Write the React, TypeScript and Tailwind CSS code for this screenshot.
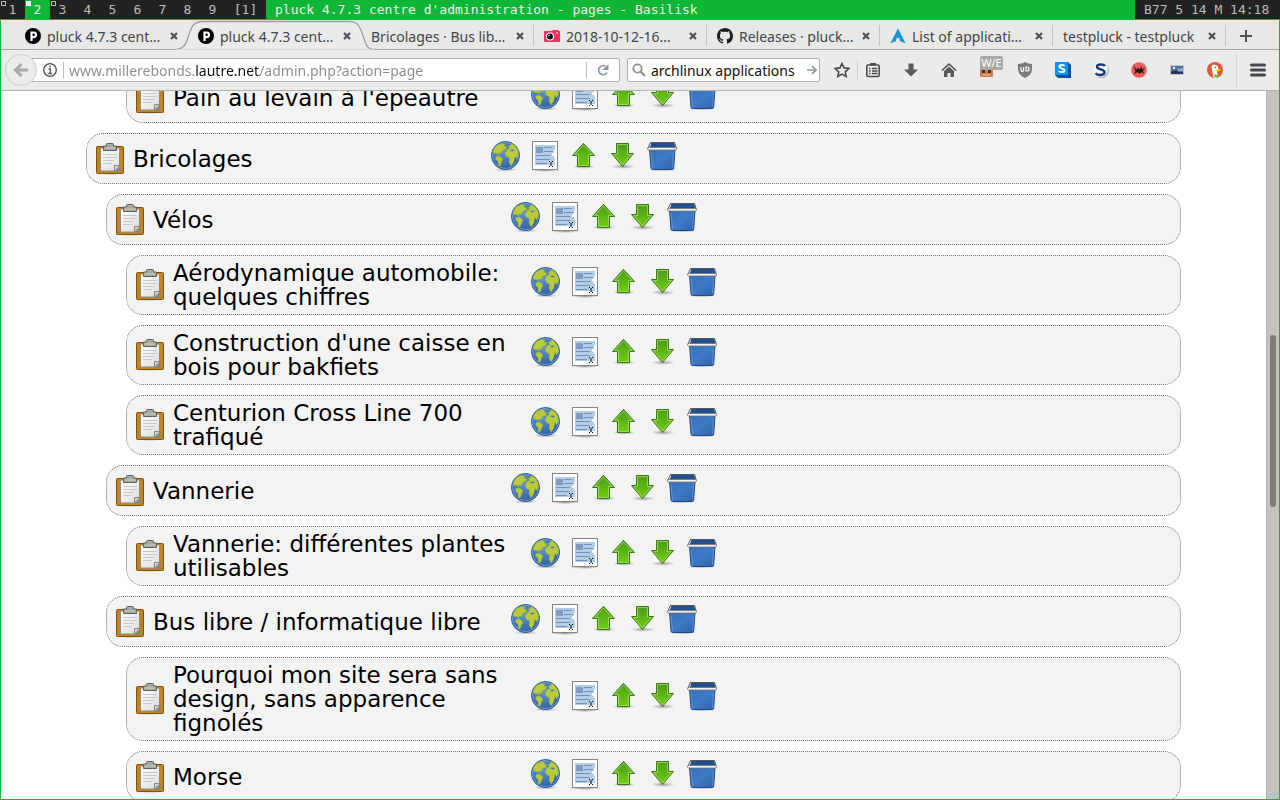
import type { ReactNode } from "react";
import { clsx } from "clsx";

type Page = { title: string; depth: 0 | 1 | 2 };

const pages: Page[] = [
  { title: "Pain au levain à l'épeautre", depth: 2 },
  { title: "Bricolages", depth: 0 },
  { title: "Vélos", depth: 1 },
  { title: "Aérodynamique automobile: quelques chiffres", depth: 2 },
  { title: "Construction d'une caisse en bois pour bakfiets", depth: 2 },
  { title: "Centurion Cross Line 700 trafiqué", depth: 2 },
  { title: "Vannerie", depth: 1 },
  { title: "Vannerie: différentes plantes utilisables", depth: 2 },
  { title: "Bus libre / informatique libre", depth: 1 },
  { title: "Pourquoi mon site sera sans design, sans apparence fignolés", depth: 2 },
  { title: "Morse", depth: 2 },
];

const indents = ["ml-0", "ml-5", "ml-10"];

/* Gradients shared by the page icons */
function IconDefs() {
  return (
    <svg width="0" height="0" className="absolute" aria-hidden="true">
      <defs>
        <radialGradient id="sea" cx="0.4" cy="0.35" r="0.7">
          <stop offset="0" stopColor="#5f97d8" />
          <stop offset="1" stopColor="#2a5b9f" />
        </radialGradient>
        <linearGradient id="leaf" x1="0" y1="0" x2="0" y2="1">
          <stop offset="0" stopColor="#4c9a1a" />
          <stop offset="1" stopColor="#6fd010" />
        </linearGradient>
        <linearGradient id="bin" x1="0" y1="0" x2="1" y2="1">
          <stop offset="0" stopColor="#3a6fb8" />
          <stop offset="0.5" stopColor="#3f7ac6" />
          <stop offset="1" stopColor="#2f62a6" />
        </linearGradient>
        <linearGradient id="paper" x1="0" y1="0" x2="1" y2="1">
          <stop offset="0" stopColor="#ffffff" />
          <stop offset="1" stopColor="#dcdcdc" />
        </linearGradient>
        <radialGradient id="shade">
          <stop offset="0" stopColor="#000" stopOpacity="0.35" />
          <stop offset="1" stopColor="#000" stopOpacity="0" />
        </radialGradient>
      </defs>
    </svg>
  );
}

function Clipboard() {
  return (
    <svg className="size-8 shrink-0" viewBox="0 0 32 32" aria-hidden="true">
      <ellipse cx="16" cy="30.5" rx="15" ry="1.5" fill="url(#shade)" />
      <rect x="2.5" y="3.5" width="27" height="27" rx="1" fill="#c4821e" stroke="#7d5210" />
      <path d="M6 5.5h20v23H6z" fill="#8b8d88" />
      <path d="M7 5.5h18v22H7z" fill="url(#paper)" />
      <path d="M9 11.500h14M9 14.500h14M9 17.500h11M9 20.500h9" stroke="#c8c8c6" />
      <path d="M20.500 28v-5.500H26z" fill="#d5d6d2" stroke="#85877f" />
      <path d="M20.500 28.500 26.500 22.500V28.500z" fill="#85877f" />
      <path d="M12.500 3V1.500q0-1 1-1h5q1 0 1 1V3h3v4.500h-13V3z" fill="#a9aba0" stroke="#5d5f59" />
      <path d="M11 5h10" stroke="#c9cbc1" />
    </svg>
  );
}

function Globe() {
  return (
    <svg className="size-8" viewBox="0 0 32 32" aria-hidden="true">
      <ellipse cx="16" cy="29.500" rx="12" ry="2" fill="url(#shade)" />
      <circle cx="15.500" cy="15.500" r="14" fill="url(#sea)" stroke="#2b5a97" />
      <circle cx="15.500" cy="15.500" r="13" fill="none" stroke="#86b0e2" strokeOpacity="0.7" />
      <path
        d="M4 9 6.500 5.500 11 3.500l4 .5-1 2 3 1-1.500 2.500-3 1-1 3-3-.5.5 2-2.500-1.500L4 13.500l-1-2zM6 16.500l3.500-.5 3.500 3-1.500 3-1 3.500-2 .5-.5-4.500L5.500 19zM18.500 6.500 22 3.500l3.500 3L28 10.500l.500 5-2 3-1.500-2-1.500 6-2.500 3.500-2-4 .5-4-3-1.500-1.500-3 2-4 2.500-1z"
        fill="#b9cb3a"
        stroke="#97aa2e"
        strokeWidth="0.5"
      />
      <path d="m20 10 3-.5 2 1-3 1z" fill="#4079bd" />
    </svg>
  );
}

function EditPage() {
  return (
    <svg className="size-8" viewBox="0 0 32 32" aria-hidden="true">
      <ellipse cx="16" cy="30.500" rx="15" ry="1.500" fill="url(#shade)" />
      <rect x="3.500" y="1.500" width="25" height="28" fill="#fcfcfc" stroke="#858783" />
      <path d="M6 5h20v5h-1v3h-2v3h2v2h1v7H6z" fill="#b5cce6" />
      <path d="M7 7h7v6H7z" fill="#7d9cbf" />
      <path d="M15 7.500h8M15 11.500h9M7 15.500h14M7 19.500h14M7 23.500h11" stroke="#6f92ba" />
      <path d="M20 21.500h1M23 21.500h1M22 22v4M20 26.500h1M23 26.500h1" stroke="#000" />
    </svg>
  );
}

function ArrowUp() {
  return (
    <svg className="size-8" viewBox="0 0 32 32" aria-hidden="true">
      <ellipse cx="16" cy="26.500" rx="12" ry="2.500" fill="url(#shade)" />
      <path d="M15.500 3.300 26.500 15.500H21.500V26.500H9.500V15.500H4.500z" fill="url(#leaf)" stroke="#38780c" />
      <path d="M15.500 4.900 24.400 14.500H20.500V25.500H10.500V14.500H6.600z" fill="none" stroke="#a5dc76" strokeOpacity="0.8" />
    </svg>
  );
}

function ArrowDown() {
  return (
    <svg className="size-8" viewBox="0 0 32 32" aria-hidden="true">
      <ellipse cx="16" cy="26.500" rx="12" ry="2.500" fill="url(#shade)" />
      <path d="M9.500 3.500H21.500V13.500H26.500L15.500 26.500 4.500 13.500H9.500z" fill="url(#leaf)" stroke="#38780c" />
      <path d="M10.500 4.500H20.500V14.500H24.300L15.500 24.900 6.700 14.500H10.500z" fill="none" stroke="#a5dc76" strokeOpacity="0.8" />
    </svg>
  );
}

function Bin() {
  return (
    <svg className="size-8" viewBox="0 0 32 32" aria-hidden="true">
      <ellipse cx="16" cy="29.500" rx="14" ry="2" fill="url(#shade)" />
      <path d="M3.500 9h25.500l-1.300 19q-.200 1.500-1.500 1.500H6.500q-1.300 0-1.500-1.500z" fill="url(#bin)" stroke="#204a87" />
      <path d="M4.500 2.500h23.500L30 9H3z" fill="#234f90" />
      <path d="M1.500 9 4.500 2.500h24l2 6.500" fill="none" stroke="#555753" />
      <path d="M3 8 5 3.500" stroke="#dcdcda" />
      <rect x="1.500" y="7.500" width="29" height="2.500" rx="1.200" fill="#f2f2f0" stroke="#73756f" strokeWidth="0.800" />
      <path d="M5 12 6.500 28M27.500 12 26.500 28" stroke="#6fa0dd" strokeOpacity="0.700" />
    </svg>
  );
}

const actions = [
  { label: "Voir", icon: <Globe /> },
  { label: "Modifier", icon: <EditPage /> },
  { label: "Monter", icon: <ArrowUp /> },
  { label: "Descendre", icon: <ArrowDown /> },
  { label: "Supprimer", icon: <Bin /> },
];

function PageRow({ title, depth }: Page) {
  return (
    <li
      className={clsx(
        "flex min-h-[51px] items-center gap-[7px] rounded-[17px] border border-dotted border-[#777777] bg-[#f3f3f3] px-[7px] py-[5px]",
        indents[depth],
      )}
    >
      <Clipboard />
      <span className="w-[350px] text-[23px] leading-6 text-black">{title}</span>
      <div className="flex gap-[7px] pb-[6px]">
        {actions.map((a) => (
          <a key={a.label} href="#" aria-label={a.label}>
            {a.icon}
          </a>
        ))}
      </div>
    </li>
  );
}

function StatusBar() {
  return (
    <div className="flex h-[19px] shrink-0 bg-[#222222] font-['DejaVu_Sans_Mono',monospace] text-[13px] leading-[19px] whitespace-pre text-[#bbbbbb]">
      {[1, 2, 3, 4, 5, 6, 7, 8, 9].map((n) => (
        <button
          key={n}
          className={clsx("relative w-[25px] text-center", n === 2 && "bg-[#0fb534] text-[#eeeeee]")}
        >
          {n <= 3 && (
            <span
              className={clsx(
                "absolute top-px left-px size-[5px] border",
                n === 2 ? "border-[#eeeeee] bg-[#eeeeee]" : "border-[#bbbbbb]",
              )}
            />
          )}
          {n}
        </button>
      ))}
      <span className="w-[41px] text-center">[1]</span>
      <span className="flex-1 bg-[#0fb534] pl-[9px] text-[#eeeeee]">
        pluck 4.7.3 centre d'administration - pages - Basilisk
      </span>
      <span className="w-[145px] pl-[9px]">B77 5 14 M 14:18</span>
    </div>
  );
}

function PluckIcon() {
  return (
    <svg className="size-4 shrink-0" viewBox="0 0 16 16" aria-hidden="true">
      <circle cx="8" cy="8" r="8" fill="#000" />
      <path d="M6.500 13V4.500h2.200a2.300 2.300 0 0 1 0 4.600H6.500" fill="none" stroke="#fff" strokeWidth="2.200" />
    </svg>
  );
}

function CameraIcon() {
  return (
    <svg className="size-4 shrink-0" viewBox="0 0 16 16" aria-hidden="true">
      <path d="M1 3h7l1-1h5l1 1q1 0 1 1v9q0 1-1 1H1q-1 0-1-1V4q0-1 1-1z" fill="#ff2f63" />
      <circle cx="6" cy="8.500" r="4" fill="#fff" />
      <circle cx="6" cy="8.500" r="3" fill="#111" />
      <circle cx="5" cy="7.500" r="0.800" fill="#fff" />
      <path d="M12 5h2" stroke="#fff" />
    </svg>
  );
}

function GithubIcon() {
  return (
    <svg className="size-4 shrink-0" viewBox="0 0 16 16" aria-hidden="true">
      <path
        fill="#1b1f23"
        d="M8 0C3.580 0 0 3.580 0 8c0 3.540 2.290 6.530 5.470 7.590.4.070.55-.17.55-.38 0-.19-.01-.82-.01-1.490-2.010.37-2.530-.49-2.690-.94-.09-.23-.48-.94-.82-1.130-.28-.15-.68-.52-.01-.53.63-.01 1.080.58 1.230.82.72 1.210 1.870.87 2.330.66.07-.52.28-.87.51-1.070-1.780-.2-3.640-.89-3.640-3.950 0-.87.31-1.590.82-2.150-.08-.2-.36-1.020.08-2.120 0 0 .67-.21 2.200.82.64-.18 1.320-.27 2-.27s1.360.09 2 .27c1.530-1.040 2.200-.82 2.200-.82.44 1.100.16 1.920.08 2.120.51.56.82 1.270.82 2.150 0 3.070-1.870 3.750-3.650 3.950.29.25.54.73.54 1.480 0 1.070-.01 1.930-.01 2.200 0 .21.15.46.55.38A8.010 8.010 0 0 0 16 8c0-4.420-3.580-8-8-8z"
      />
    </svg>
  );
}

function ArchIcon() {
  return (
    <svg className="size-4 shrink-0" viewBox="0 0 16 16" aria-hidden="true">
      <path d="M8 0.500 15.700 15.500Q12.500 13.700 10 13.200 10 9.800 8 9.800 6 9.800 6 13.200 3.500 13.700.300 15.500z" fill="#1793d1" />
    </svg>
  );
}

function Close() {
  return (
    <svg className="size-2" viewBox="0 0 8 8" aria-hidden="true">
      <path d="M1 1l6 6M7 1L1 7" stroke="#4b5356" strokeWidth="2.200" />
    </svg>
  );
}

const tabs: { title: string; icon?: ReactNode; active?: boolean; line?: boolean }[] = [
  { title: "pluck 4.7.3 cent…", icon: <PluckIcon /> },
  { title: "pluck 4.7.3 cent…", icon: <PluckIcon />, active: true },
  { title: "Bricolages · Bus lib…", line: true },
  { title: "2018-10-12-16…", icon: <CameraIcon />, line: true },
  { title: "Releases · pluck…", icon: <GithubIcon />, line: true },
  { title: "List of applicati…", icon: <ArchIcon />, line: true },
  { title: "testpluck - testpluck", line: true },
];

function TabStrip() {
  return (
    <div className="flex h-[30px] shrink-0 border-b border-[#a3a3a3] bg-[#e8e8e7] pl-[14px] text-[14px] text-[#3f4649]">
      {tabs.map((tab, i) => (
        <div key={i} className="relative flex w-[173px] shrink-0 items-center pt-[3px] pr-[10px] pl-[10px]">
          {tab.active && (
            <svg
              className="absolute top-0 -left-[13px] h-[30px] w-[200px]"
              viewBox="0 0 200 30"
              aria-hidden="true"
            >
              <path
                d="M0 29.500C9 29.500 11 24 13.500 16S18 1.500 28 1.500H174C184 1.500 185 8 188 16S191 29.500 200 29.500"
                fill="#ebebeb"
                stroke="#9aa0a6"
                strokeWidth="1.300"
              />
              <path d="M0 30h200" stroke="#ebebeb" strokeWidth="1" />
            </svg>
          )}
          <button className="relative flex min-w-0 flex-1 items-center gap-[6px] whitespace-nowrap">
            {tab.icon}
            {tab.title}
          </button>
          <button className="relative" aria-label="Fermer l'onglet">
            <Close />
          </button>
          {tab.line && <span className="absolute top-[5px] right-0 h-[21px] w-px bg-[#c2c2c1]" />}
        </div>
      ))}
      <button className="ml-[14px] pt-[3px]" aria-label="Nouvel onglet">
        <svg className="size-3" viewBox="0 0 12 12" aria-hidden="true">
          <path d="M6 0v12M0 6h12" stroke="#4b5356" strokeWidth="2" />
        </svg>
      </button>
    </div>
  );
}

function Tool({ label, children }: { label: string; children: ReactNode }) {
  return (
    <button className="relative size-4" aria-label={label}>
      {children}
    </button>
  );
}

function Toolbar() {
  return (
    <div className="flex h-[41px] shrink-0 items-center border-b border-[#b3b3ae] bg-[#ebebeb] pr-[13px] pl-1 text-[14px]">
      <button
        className="z-10 flex size-8 shrink-0 items-center justify-center rounded-full border border-[#cfcfcf] bg-[#ececec]"
        aria-label="Page précédente"
      >
        <svg className="size-4" viewBox="0 0 16 16" aria-hidden="true">
          <path d="M8.500 2 2.500 8l6 6M3 8h12" fill="none" stroke="#a9a9a9" strokeWidth="3" />
        </svg>
      </button>
      <div className="-ml-2 flex h-6 min-w-0 flex-1 items-center rounded-[2px] border border-[#b0b0b0] bg-white pl-[13px]">
        <svg className="size-[14px] shrink-0" viewBox="0 0 14 14" aria-hidden="true">
          <circle cx="7" cy="7" r="6.300" fill="none" stroke="#4d4d4d" strokeWidth="1.300" />
          <path d="M5.500 6h1.700v4.500M5.300 10.500h3.700M6.200 3.500h1.600" fill="none" stroke="#4d4d4d" strokeWidth="1.300" />
        </svg>
        <span className="mr-[5px] ml-[6px] h-4 w-px bg-[#bdbdbd]" />
        <input
          type="text"
          aria-label="Adresse"
          defaultValue="www.millerebonds.lautre.net/admin.php?action=page"
          className="min-w-0 flex-1 bg-[linear-gradient(to_right,#8b8b8b_127px,#111111_127px,#111111_191px,#8b8b8b_191px)] bg-clip-text text-transparent outline-none"
        />
        <button className="flex h-4 w-[33px] items-center justify-center border-l border-[#bdbdbd]" aria-label="Actualiser">
          <svg className="size-3" viewBox="0 0 12 12" aria-hidden="true">
            <path d="M10 8.500A4.500 4.500 0 1 1 8.500 2.300" fill="none" stroke="#8b98a5" strokeWidth="1.800" />
            <path d="M11.500 0v6h-6z" fill="#8b98a5" />
          </svg>
        </button>
      </div>
      <div className="ml-[7px] flex h-6 w-[193px] items-center rounded-[2px] border border-[#b0b0b0] bg-white pr-[2px] pl-1">
        <svg className="size-[14px] shrink-0" viewBox="0 0 14 14" aria-hidden="true">
          <circle cx="5.500" cy="5.500" r="4.200" fill="none" stroke="#8f8f8f" strokeWidth="1.800" />
          <path d="m8.500 8.500 4.500 4.500" stroke="#8f8f8f" strokeWidth="2.200" />
        </svg>
        <input
          type="text"
          aria-label="Rechercher"
          defaultValue="archlinux applications"
          className="ml-[5px] min-w-0 flex-1 text-[#111111] outline-none"
        />
        <button aria-label="Lancer la recherche">
          <svg className="size-[10px]" viewBox="0 0 10 10" aria-hidden="true">
            <path d="M0 5h8M5 1l4 4-4 4" fill="none" stroke="#8b98a5" strokeWidth="1.700" />
          </svg>
        </button>
      </div>
      <button className="mr-[7px] ml-[14px]" aria-label="Marque-page">
        <svg className="size-4" viewBox="0 0 16 16" aria-hidden="true">
          <path
            d="m8 1.500 2 4.400 4.800.6-3.500 3.300.9 4.700L8 12.100l-4.200 2.400.9-4.700L1.200 6.500 6 5.900z"
            fill="none"
            stroke="#4b4b4b"
            strokeWidth="1.600"
          />
        </svg>
      </button>
      <span className="h-[18px] w-px bg-[#cccccc]" />
      <div className="ml-[7px] flex gap-[22px]">
        <Tool label="Liste des marque-pages">
          <svg viewBox="0 0 16 16" aria-hidden="true">
            <rect x="1.800" y="3" width="12.400" height="11.500" rx="1.500" fill="none" stroke="#4b4b4b" strokeWidth="1.600" />
            <path d="M5 1h6v2.500H5z" fill="#4b4b4b" />
            <path d="M4 6.500h1.500M7 6.500h5.500M4 9h1.500M7 9h5.500M4 11.500h1.500M7 11.500h5.500" stroke="#4b4b4b" strokeWidth="1.300" />
          </svg>
        </Tool>
        <Tool label="Téléchargements">
          <svg viewBox="0 0 16 16" aria-hidden="true">
            <path d="M5.500 1.500h5v6H15L8 14.500 1 7.500h4.500z" fill="#5a5a5a" />
          </svg>
        </Tool>
        <Tool label="Accueil">
          <svg viewBox="0 0 16 16" aria-hidden="true">
            <path d="M1 8.500 8 2l7 6.500" fill="none" stroke="#4b4b4b" strokeWidth="1.600" />
            <path d="m8 4.500 5 4.700V15H9.500v-4h-3v4H3V9.200z" fill="#5a5a5a" />
          </svg>
        </Tool>
        <Tool label="W/E">
          <svg viewBox="0 0 16 16" aria-hidden="true">
            <rect x="1" y="4" width="13" height="11" rx="1" fill="#c9804f" />
            <path d="M3 8h3v3H3zM9 8h3v3H9z" fill="#4a2c1c" />
            <path d="M4 13h7" stroke="#f2c9a5" />
          </svg>
          <span className="absolute -top-[6px] left-px h-[14px] w-[23px] rounded-[2px] bg-[#a9a9a9] text-center text-[11px] leading-[13px] text-white">
            W/E
          </span>
        </Tool>
        <Tool label="uBlock">
          <svg viewBox="0 0 16 16" aria-hidden="true">
            <path d="M8 0q3 2 7 2v5q0 6-7 9-7-3-7-9V2q4 0 7-2z" fill="#7b7b7b" />
            <path d="M4 5v3q0 1.300 1.300 1.300T6.600 8V5M9 5v4h1q2 0 2-2t-2-2z" fill="none" stroke="#fff" strokeWidth="1.200" />
          </svg>
        </Tool>
        <Tool label="Stylish">
          <svg viewBox="0 0 16 16" aria-hidden="true">
            <path d="M0 0h13l3 3v13H3l-3-3z" fill="#00559e" />
            <path d="M0 0h13v13H0z" fill="#0095f9" />
            <path d="M9.500 4C8.500 2.700 4.300 2.700 4.300 4.700S9.500 6.300 9.500 8.400 4.800 10.400 3.700 9" fill="none" stroke="#fff" strokeWidth="2" />
          </svg>
        </Tool>
        <Tool label="Scripts">
          <svg viewBox="0 0 16 16" aria-hidden="true">
            <circle cx="8.500" cy="8.500" r="7.500" fill="#aaa" />
            <circle cx="7.500" cy="7.500" r="7.500" fill="#f8f8fb" />
            <path d="M12 4C10.500 1.800 4 1.800 4 4.800S11.500 7 11.500 10.200 4.500 13.800 2.500 11.300" fill="none" stroke="#16397e" strokeWidth="2.500" />
          </svg>
        </Tool>
        <Tool label="Bloqueur">
          <svg viewBox="0 0 16 16" aria-hidden="true">
            <circle cx="8" cy="8" r="7.800" fill="#f15a5b" />
            <path d="m2.500 4 3 3.500L7 5.500l1.200 2L11 4l-.2 3.500L14 5.500 12 9l1 3-2.500-1.800L8.200 12l-1.700-2L3 12.500 4.500 9z" fill="#231815" />
          </svg>
        </Tool>
        <Tool label="Images">
          <svg viewBox="0 0 16 16" aria-hidden="true">
            <path d="M1.500 3.500h13v9h-13z" fill="#4f75a8" stroke="#c2c6cc" />
            <path d="M2 9.500q6-2 12 0V12H2z" fill="#26364f" />
            <circle cx="5" cy="6" r="1.200" fill="#f3efc0" />
            <path d="M8 6.500h6v3H9z" fill="#93a9c6" />
          </svg>
        </Tool>
        <Tool label="DuckDuckGo">
          <svg viewBox="0 0 16 16" aria-hidden="true">
            <circle cx="8" cy="8" r="8" fill="#de5833" />
            <path d="M4.500 4Q6 1.500 9 3q2.500 1 2.500 4L10 10l1 5.300q-2.500.8-4.500 0L5 8z" fill="#fff" />
            <path d="M9 7.500q3-1 5 0-1 1.500-5 1.500z" fill="#fdd20a" />
            <path d="m7.500 12 4 1.500v2l-4-.5z" fill="#65bc46" />
            <circle cx="8.500" cy="5.500" r="0.800" fill="#2d4f8e" />
          </svg>
        </Tool>
      </div>
      <span className="ml-[13px] h-9 w-px bg-[#d6d6d6]" />
      <button className="ml-[13px]" aria-label="Ouvrir le menu">
        <svg className="size-4" viewBox="0 0 16 16" aria-hidden="true">
          <path d="M1.500 3h13M1.500 8h13M1.500 13h13" stroke="#45484a" strokeWidth="3" strokeLinecap="round" />
        </svg>
      </button>
    </div>
  );
}

export default function App() {
  return (
    <div className="flex h-screen flex-col overflow-hidden font-['Noto_Sans',sans-serif]">
      <IconDefs />
      <StatusBar />
      <div className="flex min-h-0 flex-1 flex-col border border-[#0fb534]">
        <TabStrip />
        <Toolbar />
        <div className="flex min-h-0 flex-1 overflow-hidden bg-white">
          <main className="min-w-0 flex-1 overflow-hidden px-[85px] font-['DejaVu_Sans',sans-serif]">
            <ul className="-mt-[19px] flex flex-col gap-[10px]">
              {pages.map((page) => (
                <PageRow key={page.title} {...page} />
              ))}
            </ul>
          </main>
          <div className="w-[13px] shrink-0 border-l border-[#b1b3b2] bg-[#c1c3c2] pt-[244px] pl-[3px]">
            <div className="h-[172px] w-[6px] rounded-full bg-[#7b7e7d]" />
          </div>
        </div>
      </div>
    </div>
  );
}
